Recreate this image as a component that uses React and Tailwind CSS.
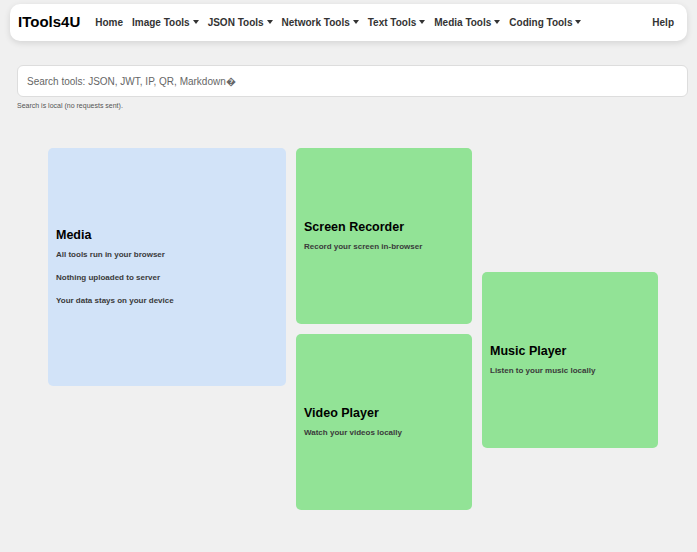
const NAV = ['Image Tools', 'JSON Tools', 'Network Tools', 'Text Tools', 'Media Tools', 'Coding Tools'];

function Caret() {
  return <span className="ml-[3px] inline-block h-0 w-0 border-x-[3px] border-t-[4px] border-x-transparent border-t-[#333] align-[2px]" />;
}

function ToolCard({ title, lines, className }) {
  return (
    <div className={`flex flex-col justify-center rounded-[5px] px-2 ${className}`}>
      <h3 className="text-[12.5px] leading-[16px] font-bold text-black">{title}</h3>
      <div className="mt-[6px] flex flex-col gap-[12px]">
        {lines.map((l) => (
          <p key={l} className="text-[8px] leading-[11px] font-bold text-[#3a3a3a]">{l}</p>
        ))}
      </div>
    </div>
  );
}

export default function App() {
  return (
    <div className="min-h-[552px] bg-[#f0f0f0] font-['Liberation_Sans',Arial,sans-serif]">
      <div className="px-[10px] pt-[4px]">
        <nav className="flex h-[37px] items-center rounded-[10px] bg-white pl-[8px] pr-[13px] shadow-[0_2px_6px_rgba(0,0,0,0.12)]">
          <span className="text-[15px] font-bold text-black">ITools4U</span>
          <div className="ml-[15px] flex items-center gap-[9px] text-[10px] font-bold text-[#333]">
            <span>Home</span>
            {NAV.map((n) => (
              <span key={n} className="whitespace-nowrap">
                {n}
                <Caret />
              </span>
            ))}
          </div>
          <span className="ml-auto text-[10px] font-bold text-[#333]">Help</span>
        </nav>
      </div>

      <div className="px-[17px] pt-[24px] pr-[9px]">
        <div className="flex h-[32px] items-center rounded-[6px] border border-[#ddd] bg-white px-[9px] text-[10px] text-[#666]">
          Search tools: JSON, JWT, IP, QR, Markdown�
        </div>
        <p className="mt-[4px] text-[7px] text-[#555]">Search is local (no requests sent).</p>
      </div>

      <div className="mt-[36px] flex gap-[10px] pl-[48px]">
        <ToolCard
          title="Media"
          lines={['All tools run in your browser', 'Nothing uploaded to server', 'Your data stays on your device']}
          className="h-[238px] w-[238px] bg-[#d2e3f8]"
        />
        <div className="flex flex-col gap-[10px]">
          <ToolCard title="Screen Recorder" lines={['Record your screen in-browser']} className="h-[176px] w-[176px] bg-[#92e396]" />
          <ToolCard title="Video Player" lines={['Watch your videos locally']} className="h-[176px] w-[176px] bg-[#92e396]" />
        </div>
        <div className="pt-[124px]">
          <ToolCard title="Music Player" lines={['Listen to your music locally']} className="h-[176px] w-[176px] bg-[#92e396]" />
        </div>
      </div>
    </div>
  );
}
